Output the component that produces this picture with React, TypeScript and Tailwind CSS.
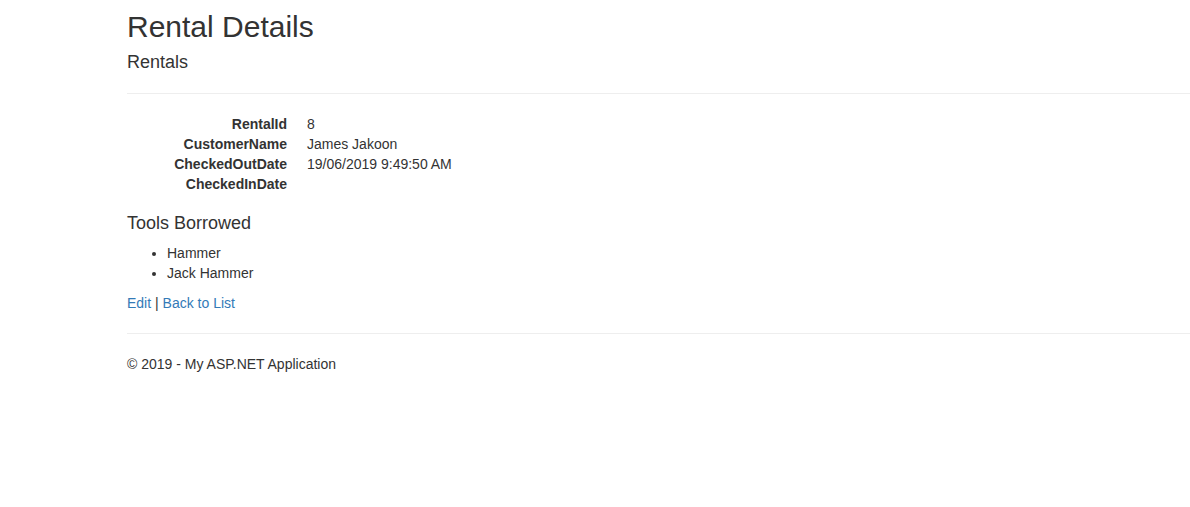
const details: [string, string][] = [
  ['RentalId', '8'],
  ['CustomerName', 'James Jakoon'],
  ['CheckedOutDate', '19/06/2019 9:49:50 AM'],
  ['CheckedInDate', ''],
]

const tools = ['Hammer', 'Jack Hammer']

export default function App() {
  return (
    <div className="min-h-[507px] bg-white pl-[127px] text-[14px] leading-[20px] text-[#333] font-['Liberation_Sans',Arial,sans-serif]">
      <h2 className="pt-[10px] text-[30px] leading-[33px] font-normal">Rental Details</h2>
      <h4 className="mt-[10px] text-[18px] leading-[19.8px] font-normal">Rentals</h4>
      <hr className="mt-[20px] border-0 border-t border-[#eee]" />
      <dl className="mt-[20px] mb-[20px]">
        {details.map(([label, value]) => (
          <div key={label} className="flex h-[20px]">
            <dt className="w-[160px] text-right font-bold">{label}</dt>
            <dd className="ml-[20px]">{value}</dd>
          </div>
        ))}
      </dl>
      <h4 className="text-[18px] leading-[19.8px] font-normal">Tools Borrowed</h4>
      <ul className="mt-[9.4px] mb-[10px] list-disc pl-[40px]">
        {tools.map((t) => (
          <li key={t}>{t}</li>
        ))}
      </ul>
      <p>
        <a href="#" className="text-[#337ab7]">Edit</a> |{' '}
        <a href="#" className="text-[#337ab7]">Back to List</a>
      </p>
      <hr className="mt-[20px] border-0 border-t border-[#eee]" />
      <footer className="mt-[20px]">
        <p>© 2019 - My ASP.NET Application</p>
      </footer>
    </div>
  )
}
